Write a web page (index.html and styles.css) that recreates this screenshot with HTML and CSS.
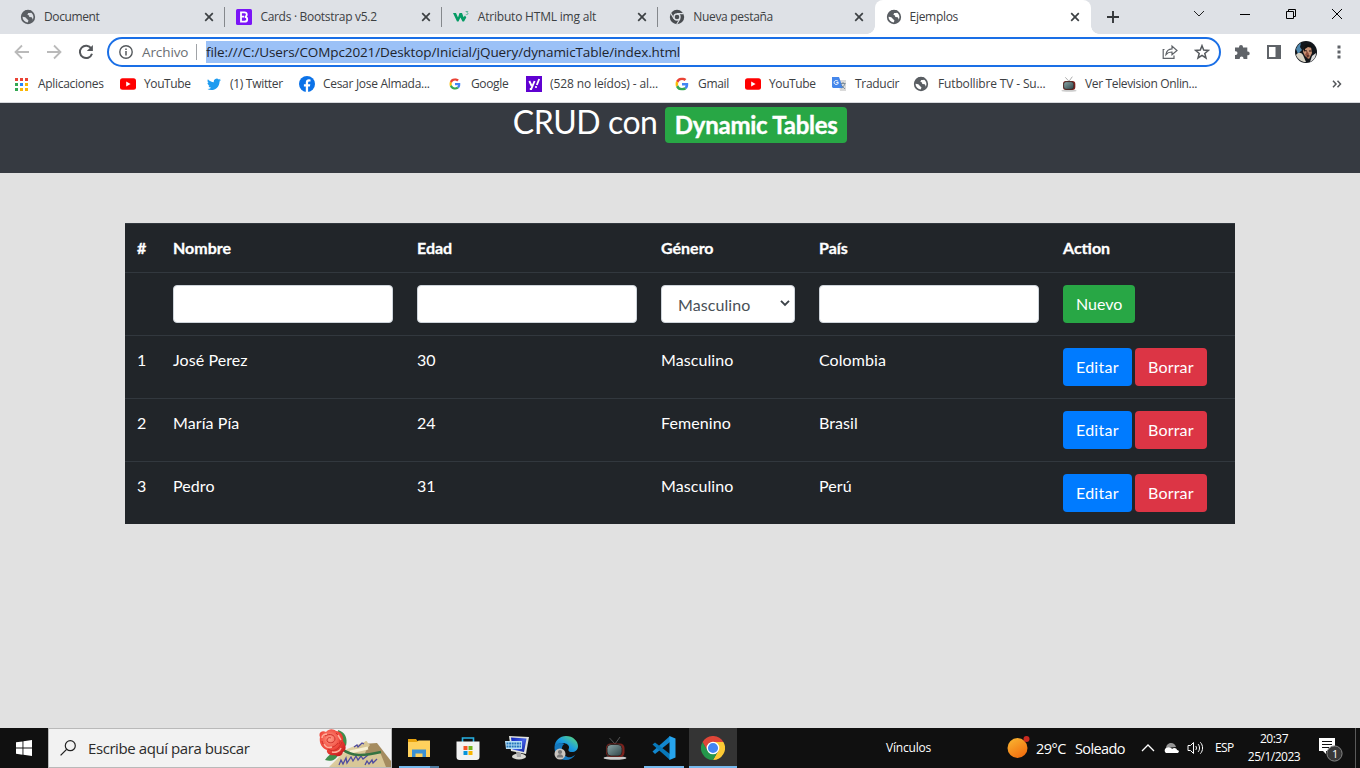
FILE: index.html
```html
<!DOCTYPE html>
<html lang="es">
<head>
<meta charset="utf-8">
<title>Ejemplos</title>
<link rel="stylesheet" href="styles.css">
</head>
<body>
<svg class="defs" aria-hidden="true">
  <defs>
    <linearGradient id="edgeA" x1="0" y1="1" x2="1" y2="0"><stop offset="0" stop-color="#0c59a4"/><stop offset=".5" stop-color="#1b9de2"/><stop offset="1" stop-color="#66e06a"/></linearGradient>
    <linearGradient id="sun" x1="0" y1="0" x2=".6" y2="1"><stop offset="0" stop-color="#f9b934"/><stop offset="1" stop-color="#f2700f"/></linearGradient>
    <linearGradient id="screen" x1="0" y1="0" x2="1" y2="1"><stop offset="0" stop-color="#0b1fb5"/><stop offset=".5" stop-color="#4461e8"/><stop offset="1" stop-color="#0a1c9a"/></linearGradient>
    <linearGradient id="tube" x1="0" y1="0" x2="1" y2="1"><stop offset="0" stop-color="#8fa9aa"/><stop offset="1" stop-color="#2c4347"/></linearGradient>
    <linearGradient id="paper" x1="0" y1="0" x2="1" y2="1"><stop offset="0" stop-color="#efe3b9"/><stop offset="1" stop-color="#c9b583"/></linearGradient>
    <radialGradient id="petal" cx=".4" cy=".35" r=".7"><stop offset="0" stop-color="#ff9a86"/><stop offset=".6" stop-color="#ef4438"/><stop offset="1" stop-color="#c81f20"/></radialGradient>
    <symbol id="globe" viewBox="0 0 16 16"><circle cx="8" cy="8" r="6.300" fill="none" stroke="#5a5e63" stroke-width="1.700"/><path d="M8 1c1.500 0 2.800.4 3.800 1.100L10.500 4H8.200L7.400 5.800 9 6.500 9.300 8l2.400.3 1.200 2.200-1.800 3C6 16.500 8.300 12 8.500 11.500L7 10 5.300 8.200 1.500 7.400C1.800 3.800 4.500 1 8 1z" fill="#5a5e63"/></symbol>
    <symbol id="close" viewBox="0 0 10 10"><path d="m1.200 1.200 7.600 7.600m0-7.600L1.200 8.800" stroke="#3c4043" stroke-width="1.700" fill="none"/></symbol>
    <symbol id="g" viewBox="0 0 48 48"><path fill="#ea4335" d="M24 9.500c3.500 0 6.700 1.200 9.200 3.600l6.900-6.900C35.900 2.400 30.500 0 24 0 14.600 0 6.500 5.400 2.600 13.200l8 6.200C12.400 13.700 17.700 9.500 24 9.500z"/><path fill="#4285f4" d="M47 24.600c0-1.600-.2-3.100-.4-4.600H24v9h12.900c-.6 3-2.200 5.500-4.700 7.200l7.700 6C44.400 38 47 31.800 47 24.600z"/><path fill="#fbbc05" d="M10.500 28.600a14.500 14.500 0 0 1 0-9.200l-8-6.200a24 24 0 0 0 0 21.600z"/><path fill="#34a853" d="M24 48c6.500 0 11.900-2.100 15.900-5.800l-7.700-6c-2.200 1.400-4.900 2.300-8.200 2.300-6.300 0-11.600-4.200-13.500-9.900l-8 6.200C6.500 42.600 14.600 48 24 48z"/></symbol>
    <symbol id="yt" viewBox="0 0 16 16"><rect y="2.300" width="16" height="11.500" rx="2.500" fill="#f00"/><path d="M6.200 5.500v5l4.400-2.500z" fill="#fff"/></symbol>
    <symbol id="tv" viewBox="0 0 24 24"><path d="M12 8 6.500 2M12 8l5-7" stroke="#666" stroke-width=".8" fill="none"/><ellipse cx="12" cy="22" rx="11.500" ry="1.800" fill="#ccc"/><rect x="3" y="7.500" width="18.500" height="13.500" rx="4.500" fill="#7d211c"/><rect x="4" y="8.500" width="15" height="11.500" rx="4" fill="url(#tube)" stroke="#342623"/></symbol>
  </defs>
</svg>
<div class="screen">
  <div class="tabs">
    <div class="tab"><svg class="fav"><use href="#globe"/></svg><span class="tab-title t1">Document</span><svg class="x"><use href="#close"/></svg></div>
    <div class="tab"><svg class="fav" viewBox="0 0 16 16"><rect width="16" height="16" rx="1.500" fill="#7b15f7"/><path d="M5 3.300h3.500c3 0 3 4 .3 4.500 3.300.3 3.200 4.900-.3 4.900H5zm0 4.400h3" fill="none" stroke="#fff" stroke-width="1.800"/></svg><span class="tab-title t2">Cards · Bootstrap v5.2</span><svg class="x"><use href="#close"/></svg></div>
    <div class="tab"><svg class="fav" viewBox="0 0 16 16"><path d="M0 4h3l2 4.500L6.500 4H9l1.600 4.200L12 6.500l1.300 2L11 12.500H9.500L7.400 8.600 5.500 12.500H4z" fill="#049b64"/><path d="M12.600 2.500h2.300l-1 1.200c1.500 0 1.500 1.900-.1 1.900h-1" fill="none" stroke="#5fb99a"/></svg><span class="tab-title t3">Atributo HTML img alt</span><svg class="x"><use href="#close"/></svg></div>
    <div class="tab no-line"><svg class="fav" viewBox="0 0 16 16"><circle cx="8" cy="8" r="7.200" fill="#494c50"/><circle cx="8" cy="8" r="3" fill="#494c50" stroke="#dee1e6" stroke-width="1.400"/><path d="M8 4.600h6.500M5 9.700 1.800 4.200M11 9.700l-3.300 5.600" stroke="#dee1e6" stroke-width="1.100"/></svg><span class="tab-title t4">Nueva pestaña</span><svg class="x"><use href="#close"/></svg></div>
    <div class="tab active"><svg class="fav"><use href="#globe"/></svg><span class="tab-title t5">Ejemplos</span><svg class="x"><use href="#close"/></svg></div>
    <svg class="plus" viewBox="0 0 12 12"><path d="M6 0v12M0 6h12" stroke="#34373a" stroke-width="1.900"/></svg>
    <div class="window-controls">
      <svg viewBox="0 0 12 12"><path d="m1 3 5 5 5-5" fill="none" stroke="#222"/></svg>
      <svg viewBox="0 0 12 12"><path d="M1 6.500h10" stroke="#000"/></svg>
      <svg viewBox="0 0 12 12"><path d="M1.500 3.500h7v7h-7zm2 0v-2h7v7h-2" fill="none" stroke="#000"/></svg>
      <svg viewBox="0 0 12 12"><path d="m1 1 10 10M11 1 1 11" stroke="#000"/></svg>
    </div>
  </div>
  <div class="toolbar">
    <svg class="nav" viewBox="0 0 16 16"><path d="M15 8H2m6-6.500L1.500 8 8 14.500" fill="none" stroke="#bababa" stroke-width="1.800"/></svg>
    <svg class="nav" viewBox="0 0 16 16"><path d="M1 8h13M8 1.500 14.500 8 8 14.500" fill="none" stroke="#bababa" stroke-width="1.800"/></svg>
    <svg class="nav" viewBox="0 0 16 16"><path d="M13.300 4.500A6.200 6.200 0 1 0 14 9.800" fill="none" stroke="#54575b" stroke-width="2"/><path d="M14.900 1v6H8.800z" fill="#54575b"/></svg>
    <div class="omnibox">
      <svg class="info" viewBox="0 0 14 14"><circle cx="7" cy="7" r="6.200" fill="none" stroke="#55595d" stroke-width="1.400"/><path d="M7 6v4.500M7 3.500V5" stroke="#55595d" stroke-width="1.500"/></svg>
      <span class="scheme">Archivo</span>
      <span class="url">file:///C:/Users/COMpc2021/Desktop/Inicial/jQuery/dynamicTable/index.html</span>
      <svg class="share" viewBox="0 0 16 16"><path d="M2.500 5.500H1.200v8.800H12v-2.800" fill="none" stroke="#5f6368" stroke-width="1.200"/><path d="M4 10.500c.5-4 2.600-5.600 6-5.700V2l5 4.500-5 4.200V8C7.500 7.900 5.700 8.500 4 10.500z" fill="none" stroke="#5f6368" stroke-width="1.200"/></svg>
      <svg class="star" viewBox="0 0 16 16"><path d="m8 1.700 1.700 4.400 4.700.3-3.600 3 1.200 4.600-4-2.600L4 14l1.200-4.600-3.600-3 4.700-.3z" fill="none" stroke="#55595d" stroke-width="1.500"/></svg>
    </div>
    <svg class="puzzle" viewBox="0 0 16 16"><path d="M1 3.500h4V3a2 2 0 0 1 4 0v.5h4.300v4h.5a1.900 1.900 0 0 1 0 3.800h-.5V15H9.500v-.6a1.900 1.900 0 0 0-3.800 0v.6H1v-4h.6a1.900 1.900 0 0 0 0-3.800H1z" fill="#5f6368"/></svg>
    <svg class="panel" viewBox="0 0 14 14"><path d="M1 1h12v12H1z" fill="none" stroke="#5f6368" stroke-width="2"/><path d="M8.500 0H14v14H8.500z" fill="#5f6368"/></svg>
    <svg class="avatar" viewBox="0 0 22 22"><circle cx="11" cy="11" r="11" fill="#12161b"/><path d="M1 8c2-4 3-5 5-6L5 6l2 3-4 4z" fill="#4d86ad"/><path d="M1 14c2-3 5-3 7 0l3 7H9c-4-1-7-4-8-7z" fill="#d8d3c5"/><path d="M9 6c2-2 6-2 7 0l1 6-3 6-4-3-2-4z" fill="#c68f72"/><path d="m12 10-2 4 3 4 1-5z" fill="#8e4e3c"/><path d="M8 8c1-6 9-6 9-1l-4-1-3 2v3z" fill="#111"/><path d="m9.500 9.500 2.500.5m2 0h2.500M12 15h2.500" stroke="#2c1613"/><path d="m17 15 4-3c0 4-2 7-6 9z" fill="#ddd"/></svg>
    <svg class="dots" viewBox="0 0 4 14"><path d="M.5.500h3v3h-3zm0 5h3v3h-3zm0 5h3v3h-3z" fill="#5f6368"/></svg>
  </div>
  <div class="bookmarks">
    <div class="bm"><svg viewBox="0 0 16 16"><path d="M1 2h3v3H1zM6 2h3v3H6zM11 2h3v3h-3z" fill="#ea4335"/><path d="M1 7h3v3H1zM1 12h3v3H1z" fill="#34a853"/><path d="M6 7h3v3H6z" fill="#2684fc"/><path d="M11 7h3v3h-3zM11 12h3v3h-3zM6 12h3v3H6z" fill="#fbb605"/></svg><span class="b1">Aplicaciones</span></div>
    <div class="bm"><svg><use href="#yt"/></svg><span class="b2">YouTube</span></div>
    <div class="bm"><svg viewBox="0 0 24 24"><path d="M22.500 6c-.8.300-1.600.6-2.500.7.900-.5 1.600-1.400 1.900-2.400-.8.500-1.800.9-2.700 1.100a4.300 4.300 0 0 0-7.400 3.900C8.200 9.100 5 7.400 2.900 4.800c-1.200 2-.6 4.500 1.300 5.800-.7 0-1.400-.2-2-.5 0 2.100 1.500 3.900 3.500 4.300-.6.200-1.300.2-2 .1.600 1.700 2.100 3 4 3A8.600 8.600 0 0 1 1.400 19.300c8.600 5 18.900-.7 18.900-11.100.9-.6 1.600-1.300 2.200-2.200z" fill="#1d9bf0"/></svg><span class="b3">(1) Twitter</span></div>
    <div class="bm"><svg viewBox="0 0 16 16"><circle cx="8" cy="8" r="8" fill="#0b72e8"/><path d="M6.800 16v-5.500H4.900V8.200h1.900V6.600c0-2.200 1.300-3.300 3.100-3.300l1.600.1v2h-1.100c-1 0-1.300.6-1.300 1.300v1.500h2.200l-.4 2.300H9.100V16z" fill="#fff"/></svg><span class="b4">Cesar Jose Almada...</span></div>
    <div class="bm"><svg viewBox="-10 -10 68 68"><use href="#g" width="48" height="48"/></svg><span class="b5">Google</span></div>
    <div class="bm"><svg viewBox="0 0 16 16"><path d="M0 0h16v16H0z" fill="#5f01d1"/><path d="m3.300 5 2.400 5M8.600 5l-3.400 8H3.800M13.200 3l-2.400 6" stroke="#fff" stroke-width="1.900" fill="none"/><circle cx="10" cy="11" r="1.100" fill="#fff"/></svg><span class="b6">(528 no leídos) - al...</span></div>
    <div class="bm"><svg viewBox="-5 -5 58 58"><use href="#g" width="48" height="48"/></svg><span class="b7">Gmail</span></div>
    <div class="bm"><svg><use href="#yt"/></svg><span class="b2">YouTube</span></div>
    <div class="bm"><svg viewBox="0 0 16 16"><path d="M7 4h8v11H9z" fill="#dadada"/><path d="M1 1h7l4 11H2L1 11z" fill="#4587eb"/><path d="M7.200 5.400C5 3.500 3 5 3.100 6.600c.2 2.500 4.300 2.500 4.200 0H5.300" stroke="#fff" fill="none"/><path d="M9.500 7.500h5M12 6v1.500m2 0c-.5 2-2 3.500-3.500 4.500m-.5-3 4 4" stroke="#687f91" stroke-width=".8" fill="none"/></svg><span class="b9">Traducir</span></div>
    <div class="bm futbol"><svg><use href="#globe"/></svg><span class="b10">Futbollibre TV - Su...</span></div>
    <div class="bm"><svg><use href="#tv"/></svg><span class="b11">Ver Television Onlin...</span></div>
    <svg class="more" viewBox="0 0 10 8"><path d="m1 .8 3 3.200-3 3.200M5.500.8l3 3.200-3 3.200" fill="none" stroke="#55585c" stroke-width="1.500"/></svg>
  </div>
  <main class="page">
    <header class="hero"><h2>CRUD con <span class="badge">Dynamic Tables</span></h2></header>
    <table>
      <colgroup><col class="c-id"><col class="c-wide"><col class="c-wide"><col class="c-gen"><col class="c-wide"><col class="c-act"></colgroup>
      <thead><tr><th>#</th><th>Nombre</th><th>Edad</th><th>Género</th><th>País</th><th>Action</th></tr></thead>
      <tbody>
        <tr><td></td><td><div class="field"></div></td><td><div class="field"></div></td><td><div class="field select">Masculino<svg viewBox="0 0 10 8"><path d="m1 1.800 4 4 4-4" fill="none" stroke="#3c4248" stroke-width="1.900"/></svg></div></td><td><div class="field"></div></td><td><span class="btn green">Nuevo</span></td></tr>
        <tr><td>1</td><td>José Perez</td><td>30</td><td>Masculino</td><td>Colombia</td><td><div class="actions"><span class="btn blue">Editar</span><span class="btn red">Borrar</span></div></td></tr>
        <tr><td>2</td><td>María Pía</td><td>24</td><td>Femenino</td><td>Brasil</td><td><div class="actions"><span class="btn blue">Editar</span><span class="btn red">Borrar</span></div></td></tr>
        <tr><td>3</td><td>Pedro</td><td>31</td><td>Masculino</td><td>Perú</td><td><div class="actions"><span class="btn blue">Editar</span><span class="btn red">Borrar</span></div></td></tr>
      </tbody>
    </table>
  </main>
  <div class="taskbar">
    <div class="start"><svg viewBox="0 0 16 16"><path d="M0 2.300 6.500 1.400v6.200H0zM7.400 1.200 16 0v7.600H7.400zM0 8.500h6.500v6.200L0 13.800zM7.400 8.500H16V16l-8.600-1.200z" fill="#fff"/></svg></div>
    <div class="search">
      <svg class="lens" viewBox="0 0 16 16"><circle cx="10.300" cy="5.700" r="5" fill="none" stroke="#222" stroke-width="1.200"/><path d="M6.600 9.400.6 15.400" stroke="#222" stroke-width="1.300"/></svg>
      <span>Escribe aquí para buscar</span>
      <svg class="rose" viewBox="0 0 73 38"><path d="m44 15 15-1 14 18v6H52z" fill="#a58c60"/><path d="m29 20 20-8 1 6L40 38H11z" fill="url(#paper)"/><path d="m48 12 4 4-8 11 18-4 6 15H18l12-13z" fill="#d8c797"/><path d="m32 23 18-4" stroke="#f7f0d2" stroke-width="3"/><path d="m21 36 2-5 2 4 3-6 1 5 4-6 2 4 3-5 2 4 3-4 2 3 5-4M36 18l3-2 1 2 4-4 2 1M47 36l2-4 2 3 3-4 1 3 4-4" fill="none" stroke="#4d4aa0" stroke-width="1.300"/><path d="M24 20c10 8 22 7 39 3" fill="none" stroke="#357341" stroke-width="2.500"/><path d="M20 1c7 2 10 8 8 16l-7-5zM7 31c4-6 8-8 13-5-2 5-7 7-13 5z" fill="#3f8f4d"/><path d="M2 8C0 4 4 1 8 3c3-4 8-3 10-1 5 0 8 5 7 10 4 5 3 10 0 11-1 5-6 5-8 3-5 1-9-2-8-5-6-2-8-8-7-13z" fill="url(#petal)"/><path d="M7 7c5-3 10-1 10 3s-6 5-8 2c0-3 2-4 4-3M4 12c2 9 12 8 16 2M10 20c6 4 11 0 14-7M18 4c5 4 5 8 3 11" fill="none" stroke="#cf302a"/><path d="M4 9c0-3 3-4 5-4M20 6l3 5M6 15c2 4 5 4 8 3M14 23c4 1 8-1 9-4" fill="none" stroke="#ffae9b" stroke-width="1.500"/></svg>
    </div>
    <div class="apps">
      <div class="app folder"><svg viewBox="0 0 24 24"><path d="M1 3h8l1.500 2H23v16H1z" fill="#e8a30e"/><path d="M1 6h9l1.500-1.500H23V21H1z" fill="#ffd15d"/><path d="M5 13.500h14V21h-3.500v-3.500h-7V21H5z" fill="#3b91d4"/></svg></div>
      <div class="app"><svg viewBox="0 0 24 24"><path d="M6.500 7V2h11v5" fill="none" stroke="#27b1e3" stroke-width="1.600"/><path d="M.5 5.500h23V21a3 3 0 0 1-3 3h-17a3 3 0 0 1-3-3z" fill="#f2f2f2"/><path d="M7.500 10h4v4h-4z" fill="#f35325"/><path d="M12.500 10h4v4h-4z" fill="#72b51c"/><path d="M7.500 15h4v4h-4z" fill="#0694db"/><path d="M12.500 15h4v4h-4z" fill="#f8b500"/></svg></div>
      <div class="app"><svg viewBox="0 0 24 24"><ellipse cx="14" cy="20.500" rx="7" ry="3" fill="#d9d9d3"/><path d="m11 16 5 1v4h-4z" fill="#aaa"/><path d="m4 0 20 1-3 17L6 15z" fill="#e2e4df"/><path d="m6 1.500 15.500 1L19 16 7.500 13.500z" fill="url(#screen)"/><path d="M0 5h17v8H1z" fill="#b7dff6"/><path d="M1.500 7.500H16M1.500 10.500H16" stroke="#2576bb" stroke-width="2" stroke-dasharray="2 .6"/></svg></div>
      <div class="app"><svg viewBox="0 0 24 24"><path d="M.5 11C1 4 6 0 12 0c7 0 12 5 12 10 0 4-3 6-6 6-4 0-4-2-3-4 1-5-9-8-14.500-1z" fill="url(#edgeA)"/><path d="M.5 11c2-4 7-5 10-3-4 2-4 11 3 13 4 1 6-1 8-2.500C18 25 8 26 3 20 1 17 .5 14 .5 11z" fill="#1477bd"/><circle cx="6" cy="18" r="5.500" fill="#c9c5c0"/><circle cx="6" cy="16" r="2.100" fill="#777"/><path d="M2.700 21.500c0-4.500 6.600-4.500 6.600 0z" fill="#777"/></svg></div>
      <div class="app"><svg><use href="#tv"/></svg></div>
      <div class="app vscode"><svg viewBox="0 0 24 24"><path d="M18 0v6L3 18l-2.500-2.500z" fill="#1287ce"/><path d="M.5 8.500 3 6.500 18 18v6z" fill="#0878b9"/><path d="m17.500 0 6 2.500v19l-6 2.500z" fill="#27a5ee"/></svg></div>
      <div class="app chrome"><svg viewBox="0 0 24 24"><path d="M17.200 15 12 24A12 12 0 0 0 22.400 6H12z" fill="#fcc934"/><path d="M1.600 6 6.800 15A6 6 0 0 0 17.200 15L12 24A12 12 0 0 1 1.600 6z" fill="#24974b"/><path d="M1.600 6A12 12 0 0 1 22.400 6H12a6 6 0 0 0-5.200 9z" fill="#df4638"/><circle cx="12" cy="12" r="5.700" fill="#4285f4" stroke="#fff" stroke-width="1.300"/></svg></div>
    </div>
    <span class="links">Vínculos</span>
    <svg class="sun" viewBox="0 0 24 24"><circle cx="10.500" cy="13" r="10" fill="url(#sun)"/><circle cx="19.500" cy="4" r="3" fill="#ca2a20"/></svg>
    <span class="weather"><span class="temp">29°C</span><span class="cond">Soleado</span></span>
    <svg class="up" viewBox="0 0 14 8"><path d="m1 7 6-6 6 6" fill="none" stroke="#fff" stroke-width="1.300"/></svg>
    <svg class="cloud" viewBox="0 0 16 12"><path d="M3 6C3.500 0 11.500-1 13 5z" fill="#969696"/><path d="M3 11a3 3 0 0 1 0-5c3-2 6 0 6 1 2-2 5-.5 5 1 3 .5 2 3 0 3z" fill="#fff"/></svg>
    <svg class="sound" viewBox="0 0 17 14"><path d="M1 4.500h2.500l3-3v11l-3-3H1z" fill="none" stroke="#fff"/><path d="M8.700 5c1 1 1 3 0 4M11 3c2 2 2 6 0 8M13.300 1.300c3 3 3 8.400 0 11.400" fill="none" stroke="#fff"/></svg>
    <span class="lang">ESP</span>
    <div class="clock"><span class="time">20:37</span><span class="date">25/1/2023</span></div>
    <div class="notify"><svg viewBox="0 0 24 26"><path d="M0 1h16v13h-9v3l-3-3H0z" fill="#fff"/><path d="M3 4.500h10M3 7.500h10M3 10.500h7" stroke="#111"/><circle cx="15.500" cy="16.500" r="7.600" fill="#383838" stroke="#858585"/></svg><span class="count">1</span></div>
    <div class="desktop-edge"></div>
  </div>
</div>
</body>
</html>
```
FILE: styles.css
```css
* { box-sizing: border-box; }
body { margin: 0; background: #e1e1e1; overflow: hidden; }
svg { display: block; flex: none; }
.defs { position: absolute; width: 0; height: 0; }
.screen { width: 1360px; height: 768px; display: flex; flex-direction: column; font: 12px/16px "Open Sans", "Noto Sans", sans-serif; color: #3c4043; white-space: nowrap; }

.tabs { display: flex; align-items: center; height: 34px; flex: none; background: #dee1e6; padding-left: 9px; }
.tab { display: flex; align-items: center; width: 216.4px; height: 34px; padding: 0 11px; flex: none; background: linear-gradient(#85888c, #85888c) right center / 1px 20px no-repeat; }
.tab.no-line { background: none; }
.tab.active { background: #fff; border-radius: 8px 8px 0 0; position: relative; }
.tab.active::before, .tab.active::after { content: ""; position: absolute; bottom: 0; width: 8px; height: 8px; }
.tab.active::before { left: -8px; background: radial-gradient(circle at 0 0, #dee1e6 7.500px, #fff 8px); }
.tab.active::after { right: -8px; background: radial-gradient(circle at 100% 0, #dee1e6 7.500px, #fff 8px); }
.fav { width: 16px; height: 16px; margin-right: 8px; }
.tab-title { flex: 1; letter-spacing: -.3px; }
.t1 { letter-spacing: -.4px; }
.t2 { letter-spacing: -.3px; }
.t3 { letter-spacing: -.2px; padding-left: 1px; }
.x { width: 10px; height: 10px; }
.plus { width: 12px; height: 12px; margin-left: 16px; }
.window-controls { display: flex; gap: 34px; margin: -6px 0 0 auto; padding-right: 17px; }
.window-controls svg { width: 12px; height: 12px; }

.toolbar { display: flex; align-items: center; height: 36px; flex: none; background: #fff; padding-left: 14px; }
.nav { width: 16px; height: 16px; margin-right: 16px; }
.nav + .nav + .nav { margin-right: 13px; }
.omnibox { display: flex; align-items: center; width: 1114px; height: 30px; border: 2px solid #1a6fe6; border-radius: 15px; padding: 0 9px 0 10px; font-size: 14px; }
.info { width: 14px; height: 14px; }
.scheme { width: 55px; margin-left: 9px; color: #6a6e73; border-right: 1px solid #a0a3a7; font-size: 13.500px; letter-spacing: -.1px; }
.url { margin-left: 9px; background: #9bc1f7; color: #20242c; line-height: 22px; letter-spacing: -.1px; font-size: 13.500px; }
.share { width: 16px; height: 16px; margin-left: auto; }
.star { width: 16px; height: 16px; margin-left: 16px; }
.puzzle { width: 16px; height: 16px; margin-left: 13px; }
.panel { width: 14px; height: 14px; margin-left: 17px; }
.avatar { width: 22px; height: 22px; margin-left: 14px; }
.dots { width: 4px; height: 14px; margin-left: 20px; }

.bookmarks { display: grid; grid-template-columns: 106px 86px 93px 148px 79px 148px 71px 86px 82px 148px 271px 10px; align-items: center; height: 33px; flex: none; background: #fff; padding: 0 0 4px 14px; border-bottom: 1px solid #d6d8dc; }
.bm { display: flex; align-items: center; gap: 8px; letter-spacing: -.3px; }
.bm svg { width: 16px; height: 16px; }
.b2 { letter-spacing: -.4px; }
.b5 { letter-spacing: -.35px; }
.b6 { letter-spacing: -.12px; }
.b10 { letter-spacing: -.15px; padding-left: 1px; }
.b11 { letter-spacing: -.35px; }
.more { width: 10px; height: 8px; }

.page { flex: 1; background: #e1e1e1; color: #fff; font: 16px/24px Lato, sans-serif; }
.hero { height: 70px; background: #363a41; text-align: center; }
h2 { margin: 0; font-weight: 400; font-size: 32px; line-height: 38.400px; letter-spacing: -.45px; }
.badge { display: inline-block; font-size: 24px; line-height: 24px; font-weight: 700; padding: 6px 9.600px; background: #28a745; border-radius: 4px; vertical-align: baseline; letter-spacing: -.25px; -webkit-text-stroke: .4px #fff; }
table { width: 1110px; margin: 50px auto 0; table-layout: fixed; border-collapse: collapse; background: #212529; }
.c-id { width: 36px; }
.c-wide { width: 244px; }
.c-gen { width: 158px; }
.c-act { width: 184px; }
th, td { padding: 12px; border-top: 1px solid #32383e; text-align: left; vertical-align: top; }
td { letter-spacing: .08px; }
th { font-weight: 700; -webkit-text-stroke: .3px #fff; }
.field { height: 38px; background: #fff; border: 1px solid #ced4da; border-radius: 4px; }
.select { display: flex; align-items: center; justify-content: space-between; color: #495057; padding: 2px 4px 0 16px; }
.select svg { width: 10px; height: 8px; margin-top: -4px; }
.actions { display: flex; gap: 3px; }
.btn { display: inline-block; height: 38px; padding: 7px 13px; border-radius: 4px; vertical-align: top; letter-spacing: 0; }
.green { background: #28a745; }
.blue { background: #007bff; width: 69px; letter-spacing: .25px; }
.red { background: #dc3545; width: 72px; letter-spacing: .2px; }

.taskbar { display: flex; align-items: center; height: 40px; flex: none; background: #101010; color: #fff; }
.start { width: 48px; display: flex; justify-content: center; }
.start svg { width: 16px; height: 16px; }
.search { display: flex; align-items: center; width: 344px; height: 40px; background: #f2f2f2; border: 1px solid #b9b9b9; padding-left: 11px; font-size: 15px; letter-spacing: -.42px; color: #2b2b2b; }
.search span { margin-left: 12px; }
.lens { width: 16px; height: 16px; }
.rose { width: 73px; height: 38px; margin-left: auto; }
.apps { display: flex; width: 345px; padding-left: 3px; gap: 1px; }
.app { display: flex; align-items: center; justify-content: center; width: 48px; height: 40px; flex: none; }
.app svg { width: 24px; height: 24px; }
.folder { background: linear-gradient(90deg, #76b9ed 31px, #4f7ba0 31px) 4px 100% / 40px 2px no-repeat; }
.vscode { background: linear-gradient(#76b9ed, #76b9ed) 4px 100% / 40px 2px no-repeat; }
.chrome { background: linear-gradient(#76b9ed, #76b9ed) 0 100% / 48px 2px no-repeat #343434; }
.links { width: 121px; margin-left: 149px; letter-spacing: -.2px; }
.sun { width: 24px; height: 24px; margin-top: -3px; }
.weather { display: flex; width: 110px; font-size: 14.500px; margin-top: 1px; }
.temp { width: 39px; margin-left: 5px; letter-spacing: -.5px; }
.cond { letter-spacing: -.6px; }
.up { width: 14px; height: 8px; }
.cloud { width: 16px; height: 12px; margin-left: 8px; }
.sound { width: 17px; height: 14px; margin-left: 8px; }
.lang { width: 24px; margin-left: 11px; letter-spacing: -.6px; }
.clock { display: flex; flex-direction: column; align-items: center; width: 62px; margin-left: 4px; line-height: 18px; letter-spacing: -.5px; }
.notify { position: relative; width: 24px; height: 26px; margin-left: 14px; margin-top: 4px; }
.notify svg { width: 24px; height: 26px; }
.count { position: absolute; left: 13px; top: 9px; font-size: 11px; }
.desktop-edge { width: 1px; height: 40px; margin-left: 12px; background: #5a5a5a; }
```
